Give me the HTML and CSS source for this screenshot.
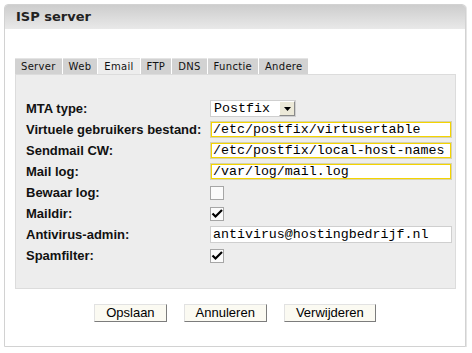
FILE: index.html
```html
<!DOCTYPE html>
<html lang="nl">
<head>
<meta charset="UTF-8">
<title>ISP server</title>
<link rel="stylesheet" href="styles.css">
</head>

<body>

<div class="box">
<div class="box-title">ISP server</div>

<div class="box-body">

<div class="tabs">
    <span class="tab">Server</span>
    <span class="tab">Web</span>
    <span class="tab active">Email</span>
    <span class="tab">FTP</span>
    <span class="tab">DNS</span>
    <span class="tab">Functie</span>
    <span class="tab">Andere</span>
</div>

<div class="panel">
    <label class="label">MTA type:</label>
    <div class="field">
        <div class="select">
            <span class="select-value">Postfix</span>
            <span class="select-arrow"><svg width="7" height="4" viewBox="0 0 7 4"><path d="M0 0h7L3.5 4z" fill="#000"/></svg></span>
        </div>
    </div>

    <label class="label">Virtuele gebruikers bestand:</label>
    <div class="field"><input class="text highlight" value="/etc/postfix/virtusertable"></div>

    <label class="label">Sendmail CW:</label>
    <div class="field"><input class="text highlight" value="/etc/postfix/local-host-names"></div>

    <label class="label">Mail log:</label>
    <div class="field"><input class="text highlight" value="/var/log/mail.log"></div>

    <label class="label">Bewaar log:</label>
    <div class="field"><span class="check"></span></div>

    <label class="label">Maildir:</label>
    <div class="field"><span class="check"><svg width="14" height="14" viewBox="0 0 14 14"><path d="M2.5 6.5l3 3L12 3" fill="none" stroke="#000" stroke-width="2.2"/></svg></span></div>

    <label class="label">Antivirus-admin:</label>
    <div class="field"><input class="text" value="antivirus@hostingbedrijf.nl"></div>

    <label class="label">Spamfilter:</label>
    <div class="field"><span class="check"><svg width="14" height="14" viewBox="0 0 14 14"><path d="M2.5 6.5l3 3L12 3" fill="none" stroke="#000" stroke-width="2.2"/></svg></span></div>
</div>

<div class="buttons">
    <button>Opslaan</button>
    <button>Annuleren</button>
    <button>Verwijderen</button>
</div>

</div>
</div>

</body>
</html>
```

FILE: styles.css
```css
body {
    margin: 0;
    background: white;
    font-family: "Liberation Sans", Arial, sans-serif;
}

.box {
    margin: 4px 0 0 4px;
    width: 460px;
    height: 341px;
    border: 1px solid #d2d2d2;
    border-radius: 4px 4px 0 0;
    box-shadow: 1px 1px 0 #e6e6e6;
    background: white;
}

.box-title {
    height: 24px;
    line-height: 24px;
    padding-left: 11px;
    background: linear-gradient(#cdcdcd, #e9e9e9);
    border-radius: 3px 3px 0 0;
    font-family: "DejaVu Sans", Verdana, sans-serif;
    font-weight: bold;
    font-size: 13px;
    color: #222;
}

.box-body {
    padding: 29px 10px 0 10px;
}

.tabs {
    display: flex;
    height: 16px;
}

.tab {
    font-family: "DejaVu Sans", Verdana, sans-serif;
    font-size: 10px;
    letter-spacing: 0.3px;
    line-height: 15px;
    padding: 0 6px;
    margin-right: 1px;
    background: #d2d2d2;
    border-top: 1px solid #e4e4e4;
    color: #111;
}

.tab.active {
    background: #ededed;
}

.panel {
    width: 429px;
    border: 1px solid #dcdcdc;
    background: #ededed;
    padding: 25px 0 24px 10px;
    display: grid;
    grid-template-columns: 184px 242px;
    grid-auto-rows: 17px;
    row-gap: 4px;
}

.label {
    font-weight: bold;
    font-size: 13px;
    line-height: 17px;
    color: #111;
}

.field {
    display: flex;
    align-items: center;
}

.text {
    box-sizing: border-box;
    width: 242px;
    height: 17px;
    margin: 0;
    padding: 0 2px;
    border: 1px solid #cfcfcf;
    background: white;
    font-family: "Liberation Mono", "Courier New", monospace;
    font-size: 13.3px;
    color: #000;
}

.text.highlight {
    border-color: #d6d2b0;
    box-shadow: inset 0 0 0 1px #f4d400;
}

.select {
    box-sizing: border-box;
    width: 86px;
    height: 17px;
    border: 1px solid #cfcfcf;
    background: white;
    display: flex;
    align-items: center;
    justify-content: space-between;
}

.select-value {
    font-family: "Liberation Mono", "Courier New", monospace;
    font-size: 13.3px;
    padding-left: 3px;
}

.select-arrow {
    box-sizing: border-box;
    width: 16px;
    height: 15px;
    background: #ece9d8;
    border: 1px solid;
    border-color: #fff #8a8a8a #8a8a8a #fff;
    display: flex;
    align-items: center;
    justify-content: center;
}

.check {
    box-sizing: border-box;
    width: 14px;
    height: 14px;
    border: 1px solid #a6a6a6;
    background: #fbfbfb;
    display: flex;
    align-items: center;
    justify-content: center;
}

.check svg {
    flex: none;
}

.buttons {
    margin-top: 15px;
    display: flex;
    justify-content: center;
    gap: 17px;
}

button {
    height: 18px;
    padding: 0 11px;
    font-family: "Liberation Sans", Arial, sans-serif;
    font-size: 13px;
    line-height: 14px;
    color: #000;
    background: #fbfaf2;
    border: 1px solid;
    border-color: #e2e2e2 #7c7c7c #7c7c7c #e2e2e2;
}
```
